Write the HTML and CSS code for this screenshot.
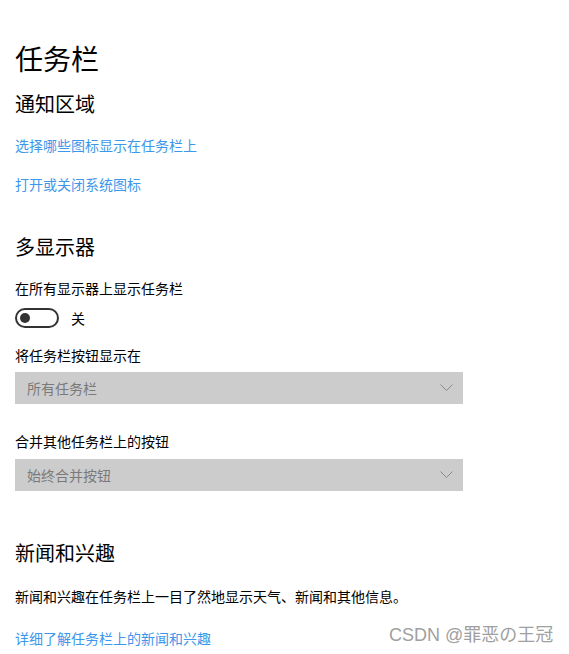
FILE: index.html
```html
<!DOCTYPE html>
<html>
<head>
    <meta charset="utf-8">
    <meta name="viewport" content="initial-scale=1, width=device-width">
    <link rel="stylesheet" href="styles.css">
</head>
<body>
    <div class="settings-page">
        <h1 class="page-title">任务栏</h1>

        <h2 class="section-title">通知区域</h2>
        <a class="link first-link" href="#">选择哪些图标显示在任务栏上</a>
        <a class="link second-link" href="#">打开或关闭系统图标</a>

        <h2 class="section-title multi-title">多显示器</h2>
        <div class="label first-label">在所有显示器上显示任务栏</div>
        <div class="toggle-row">
            <div class="toggle"><span class="knob"></span></div>
            <span class="toggle-text">关</span>
        </div>

        <div class="label second-label">将任务栏按钮显示在</div>
        <div class="dropdown first-dropdown">
            <span>所有任务栏</span>
            <svg width="13" height="8" viewBox="0 0 13 8"><polyline points="0.5,0.5 6.5,6.5 12.5,0.5" fill="none" stroke="#8a8a8a" stroke-width="1"/></svg>
        </div>

        <div class="label third-label">合并其他任务栏上的按钮</div>
        <div class="dropdown second-dropdown">
            <span>始终合并按钮</span>
            <svg width="13" height="8" viewBox="0 0 13 8"><polyline points="0.5,0.5 6.5,6.5 12.5,0.5" fill="none" stroke="#8a8a8a" stroke-width="1"/></svg>
        </div>

        <h2 class="section-title news-title">新闻和兴趣</h2>
        <div class="label desc">新闻和兴趣在任务栏上一目了然地显示天气、新闻和其他信息。</div>
        <a class="link last-link" href="#">详细了解任务栏上的新闻和兴趣</a>
    </div>
    <div class="watermark">CSDN @罪恶の王冠</div>
</body>
</html>
```

FILE: styles.css
```css
body {
    margin: 0;
    font-family: "Noto Sans CJK SC", "Noto Sans", sans-serif;
    background-color: #fff;
    color: #000;
}
.settings-page {
    padding: 40px 15px 0;
    display: flex;
    flex-direction: column;
    align-items: flex-start;
}
.page-title {
    margin: 0;
    font-size: 28px;
    line-height: 36px;
    font-weight: 400;
}
.section-title {
    margin: 14px 0 0;
    font-size: 20px;
    line-height: 28px;
    font-weight: 400;
}
.multi-title {
    margin-top: 39px;
}
.news-title {
    margin-top: 48px;
}
.link {
    font-size: 14px;
    line-height: 20px;
    color: #3d97ea;
    text-decoration: none;
}
.first-link {
    margin-top: 17px;
}
.second-link {
    margin-top: 19px;
}
.last-link {
    margin-top: 22px;
}
.label {
    font-size: 14px;
    line-height: 20px;
}
.first-label {
    margin-top: 17px;
}
.second-label {
    margin-top: 17px;
}
.third-label {
    margin-top: 27px;
}
.desc {
    margin-top: 19px;
}
.toggle-row {
    margin-top: 10px;
    display: flex;
    align-items: center;
    gap: 12px;
}
.toggle {
    width: 44px;
    height: 20px;
    box-sizing: border-box;
    border: 2px solid #333;
    border-radius: 10px;
    display: flex;
    align-items: center;
    padding: 0 3px;
}
.knob {
    width: 10px;
    height: 10px;
    border-radius: 50%;
    background-color: #333;
}
.toggle-text {
    font-size: 14px;
    line-height: 20px;
}
.dropdown {
    width: 448px;
    height: 32px;
    box-sizing: border-box;
    background-color: #cccccc;
    display: flex;
    align-items: center;
    justify-content: space-between;
    padding: 0 10px 0 12px;
    font-size: 14px;
    color: #7a7a7a;
}
.first-dropdown {
    margin-top: 7px;
}
.second-dropdown {
    margin-top: 8px;
}
.watermark {
    position: absolute;
    left: 389px;
    top: 623px;
    font-size: 18px;
    line-height: 24px;
    color: #a0a0a0;
    font-family: "Liberation Sans", "Noto Sans CJK SC", sans-serif;
}
```
